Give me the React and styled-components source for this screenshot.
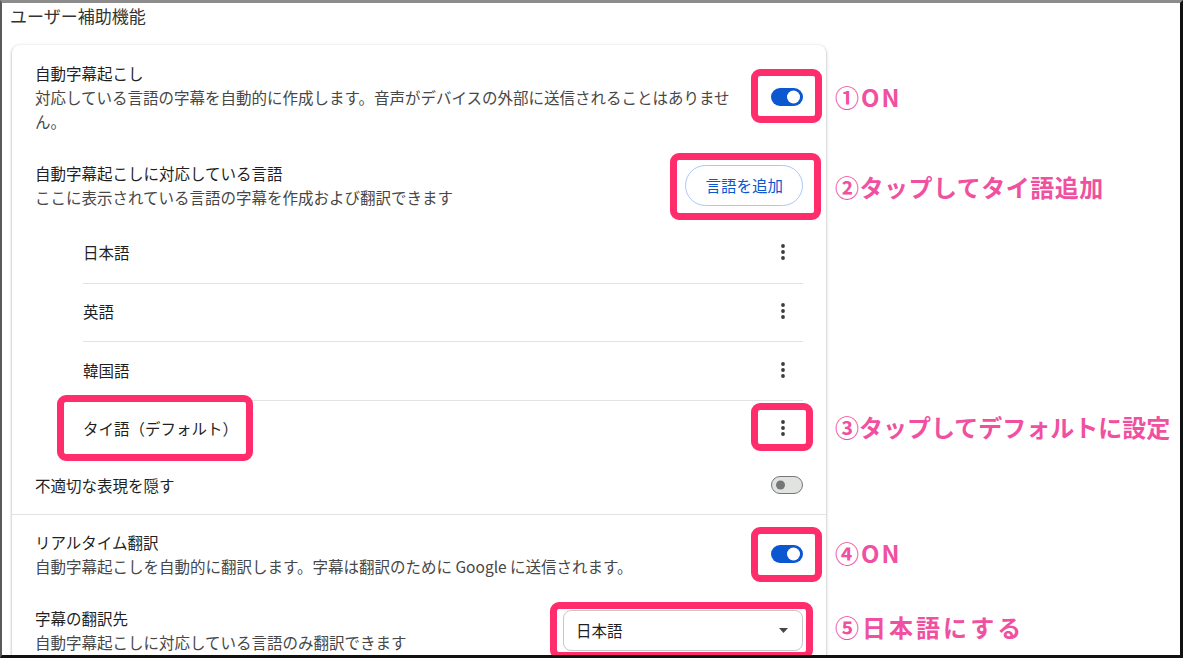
import React from 'react'
import styled, { createGlobalStyle } from 'styled-components'

const GlobalStyle = createGlobalStyle`
  html, body {
    margin: 0;
    background: #fff;
  }
  body {
    font-family: "Noto Sans CJK JP", "Noto Sans", sans-serif;
  }
`

const Frame = styled.div`
  width: 1183px;
  height: 658px;
  box-sizing: border-box;
  border-top: 3px solid #8c8c8c;
  border-left: 2px solid #595959;
  border-right: 3px solid #111;
  border-bottom: 3px solid #111;
  overflow: hidden;
  background: #fff;
`

const PageTitle = styled.h1`
  margin: 0;
  padding: 1px 8px 0;
  font-size: 17px;
  font-weight: 400;
  line-height: 24px;
  color: #333;
`

const Card = styled.section`
  width: 814px;
  margin: 17px 0 0 10px;
  background: #fff;
  border-radius: 8px;
  box-shadow: 0 1px 2px rgba(60, 64, 67, 0.3), 0 1px 3px 1px rgba(60, 64, 67, 0.15);
`

const Row = styled.div`
  display: flex;
  align-items: center;
  justify-content: space-between;
  padding: ${(p) => p.$pad || '14px 23px'};
  border-top: ${(p) => (p.$divider ? '1px solid #e3e3e3' : 'none')};
`

const Text = styled.div`
  max-width: 705px;
  font-size: 15.5px;
  line-height: 24px;
`

const Label = styled.div`
  color: #1f1f1f;
`

const Sub = styled.div`
  color: #474747;
`

const Toggle = styled.span`
  position: relative;
  display: block;
  width: 32px;
  height: 18px;
  box-sizing: border-box;
  border-radius: 9px;
  background: ${(p) => (p.$on ? '#0b57d0' : '#e1e3e1')};
  border: ${(p) => (p.$on ? 'none' : '1px solid #747775')};

  &::after {
    content: '';
    position: absolute;
    top: 50%;
    transform: translateY(-50%);
    left: ${(p) => (p.$on ? '16px' : '4px')};
    width: ${(p) => (p.$on ? '13px' : '9px')};
    height: ${(p) => (p.$on ? '13px' : '9px')};
    border-radius: 50%;
    background: ${(p) => (p.$on ? '#fff' : '#747775')};
  }
`

const PillButton = styled.button`
  height: 41px;
  padding: 0 19px;
  border: 1px solid #a8c7fa;
  border-radius: 21px;
  background: #fff;
  color: #0b57d0;
  font-family: inherit;
  font-size: 15.5px;
`

const LangList = styled.ul`
  list-style: none;
  margin: 0;
  padding: 0 23px 0 71px;
`

const LangItem = styled.li`
  display: flex;
  align-items: center;
  justify-content: space-between;
  box-sizing: border-box;
  height: 58.5px;
  padding: 0 8px 2px 0;
  font-size: 15.5px;
  line-height: 24px;
  color: #1f1f1f;

  & + & {
    border-top: 1px solid #e3e3e3;
  }
`

const IconButton = styled.span`
  display: flex;
  width: 24px;
  height: 24px;
  color: #3c3c3c;
`

const Select = styled.div`
  display: flex;
  align-items: center;
  justify-content: space-between;
  width: 240px;
  height: 41px;
  box-sizing: border-box;
  padding: 0 14px 0 12px;
  border: 1px solid #c7c7c7;
  border-radius: 8px;
  font-size: 15.5px;
  color: #1f1f1f;
  background: #fff;
`

const Mark = styled.span`
  position: relative;
  display: inline-flex;

  &::after {
    content: '';
    position: absolute;
    top: ${(p) => -p.$i[0]}px;
    right: ${(p) => -p.$i[1]}px;
    bottom: ${(p) => -p.$i[2]}px;
    left: ${(p) => -p.$i[3]}px;
    border: 7px solid #ff2d6b;
    border-radius: 9px;
    pointer-events: none;
  }
`

const Callout = styled.span`
  position: absolute;
  left: calc(100% + ${(p) => p.$x || 32}px);
  top: calc(50% + ${(p) => p.$dy || 0}px);
  transform: translateY(-50%);
  white-space: nowrap;
  font-size: 24px;
  font-weight: 700;
  line-height: 1;
  letter-spacing: ${(p) => p.$ls || 0}px;
  color: #f0509f;
`

const Kebab = () => (
  <IconButton>
    <svg width="24" height="24" viewBox="0 0 24 24" fill="currentColor">
      <circle cx="12" cy="6" r="1.9" />
      <circle cx="12" cy="12" r="1.9" />
      <circle cx="12" cy="18" r="1.9" />
    </svg>
  </IconButton>
)

const languages = ['日本語', '英語', '韓国語']

export default function App() {
  return (
    <>
      <GlobalStyle />
      <Frame>
        <PageTitle>ユーザー補助機能</PageTitle>
        <Card>
          <Row $pad="16px 23px 14px">
            <Text>
              <Label>自動字幕起こし</Label>
              <Sub>対応している言語の字幕を自動的に作成します。音声がデバイスの外部に送信されることはありません。</Sub>
            </Text>
            <Mark $i={[19, 19, 17, 20]}>
              <Toggle $on />
              <Callout $ls={2}>①ON</Callout>
            </Mark>
          </Row>

          <Row $pad="14px 23px 15px">
            <Text>
              <Label>自動字幕起こしに対応している言語</Label>
              <Sub>ここに表示されている言語の字幕を作成および翻訳できます</Sub>
            </Text>
            <Mark $i={[12, 18, 14, 15]}>
              <PillButton>言語を追加</PillButton>
              <Callout $dy={2} $ls={0.5}>②タップしてタイ語追加</Callout>
            </Mark>
          </Row>

          <LangList>
            {languages.map((lang) => (
              <LangItem key={lang}>
                {lang}
                <Kebab />
              </LangItem>
            ))}
            <LangItem>
              <Mark $i={[21, 15, 21, 26]}>タイ語（デフォルト）</Mark>
              <Mark $i={[13, 18, 11, 20]}>
                <Kebab />
                <Callout $x={40} $dy={-1}>③タップしてデフォルトに設定</Callout>
              </Mark>
            </LangItem>
          </LangList>

          <Row $pad="15px 23px 17px">
            <Text>
              <Label>不適切な表現を隠す</Label>
            </Text>
            <Toggle />
          </Row>

          <Row $divider $pad="15px 23px 14px">
            <Text>
              <Label>リアルタイム翻訳</Label>
              <Sub>自動字幕起こしを自動的に翻訳します。字幕は翻訳のために Google に送信されます。</Sub>
            </Text>
            <Mark $i={[18, 19, 19, 20]}>
              <Toggle $on />
              <Callout $dy={-1} $ls={2}>④ON</Callout>
            </Mark>
          </Row>

          <Row $pad="14px 23px">
            <Text>
              <Label>字幕の翻訳先</Label>
              <Sub>自動字幕起こしに対応している言語のみ翻訳できます</Sub>
            </Text>
            <Mark $i={[8, 10, 8, 13]}>
              <Select>
                日本語
                <svg width="9" height="5" viewBox="0 0 9 5" fill="#474747">
                  <path d="M0 0h9L4.5 5z" />
                </svg>
              </Select>
              <Callout $dy={-3} $ls={3}>⑤日本語にする</Callout>
            </Mark>
          </Row>
        </Card>
      </Frame>
    </>
  )
}
